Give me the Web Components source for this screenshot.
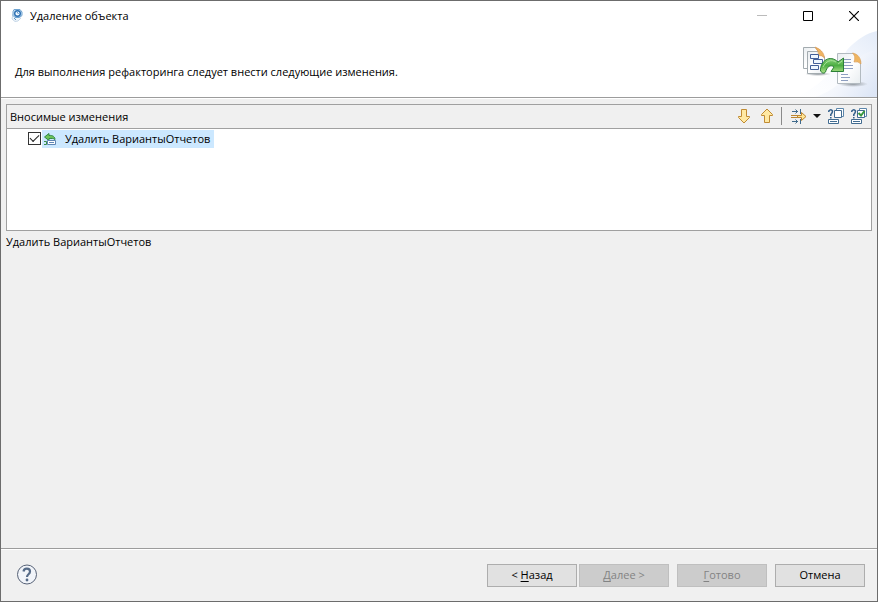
<!DOCTYPE html>
<html lang="ru">
<head>
<meta charset="utf-8">
<title>Удаление объекта</title>
<style>
  html, body { height: 100%; margin: 0; }
  body { font: 11px/16px "Open Sans", "Noto Sans", sans-serif; color: #000; }
</style>
</head>
<body>
<wizard-window>
  <title-bar slot="title">Удаление объекта</title-bar>
  <wizard-banner slot="banner">Для выполнения рефакторинга следует внести следующие изменения.</wizard-banner>
  <changes-pane>
    <span slot="heading">Вносимые изменения</span>
    <change-item>Удалить ВариантыОтчетов</change-item>
  </changes-pane>
  <change-details>Удалить ВариантыОтчетов</change-details>
  <wizard-footer slot="footer">
    <wizard-button>&lt; <u>Н</u>азад</wizard-button>
    <wizard-button disabled><u>Д</u>алее &gt;</wizard-button>
    <wizard-button slot="finish" disabled><u>Г</u>отово</wizard-button>
    <wizard-button slot="finish">Отмена</wizard-button>
  </wizard-footer>
</wizard-window>

<script>
function define(name, html, setup) {
  const template = document.createElement('template');
  template.innerHTML = html;
  customElements.define(name, class extends HTMLElement {
    constructor() {
      super();
      this.attachShadow({ mode: 'open' }).append(template.content.cloneNode(true));
    }
    connectedCallback() { if (setup) setup(this); }
  });
}

define('wizard-window', `
<style>
  :host { display: flex; flex-direction: column; box-sizing: border-box; min-height: 100vh; border: 1px solid #6c6c6c; background: #f0f0f0; }
  main { flex: 1; padding: 6px 5px; display: flex; flex-direction: column; gap: 3px; }
</style>
<slot name="title"></slot>
<slot name="banner"></slot>
<main><slot></slot></main>
<slot name="footer"></slot>`);

define('title-bar', `
<style>
  :host { display: flex; align-items: center; height: 29px; background: #fff; }
  .logo { width: 16px; height: 16px; margin: 0 5px 0 8px; }
  .name { flex: 1; }
  button { width: 46px; height: 29px; padding: 0; border: 0; background: none; display: grid; place-items: center; color: #000; }
  button:disabled { color: #bbb; }
</style>
<svg class="logo" viewBox="0 0 16 16" fill="none">
  <path d="M4 6L3 11L6 13.500L9 13L12 10" fill="#eef4fa" stroke="#c6d8e8"/>
  <path d="M5 1.500H11L13 4V7.500L10.500 9.500H6L4 7.500V3.500Z" fill="#c8def1" stroke="#6fa3d0"/>
  <circle cx="8.500" cy="5.500" r="2.800" fill="#f4f9ff" stroke="#2a6fb2" stroke-width="1.400"/>
  <path d="M8 4L9.500 6" stroke="#5b93c6"/>
  <path d="M5 10L7 12" stroke="#5b93c6"/>
</svg>
<span class="name"><slot></slot></span>
<button aria-label="Свернуть" disabled><svg width="10" height="10"><path d="M0 4.500H10" stroke="currentColor"/></svg></button>
<button aria-label="Развернуть"><svg width="10" height="10"><path d="M.5.5H9.500V9.500H.5Z" fill="none" stroke="currentColor"/></svg></button>
<button aria-label="Закрыть"><svg width="10" height="10"><path d="M0 0L10 10M10 0L0 10" stroke="currentColor" stroke-width="1.200"/></svg></button>`);

define('wizard-banner', `
<style>
  :host { display: flex; height: 67px; background: #fff; border-bottom: 1px solid #9c9c9c; box-shadow: 0 1px #fff; }
  p { flex: 1; margin: 0; padding: 34px 0 0 14px; }
  svg { flex: none; width: 80px; height: 67px; }
</style>
<p><slot></slot></p>
<svg viewBox="0 0 80 67">
  <defs>
    <linearGradient id="sky" x1="0" y1="1" x2="1" y2="0"><stop offset="0" stop-color="#fff"/><stop offset=".5" stop-color="#f8fafe"/><stop offset="1" stop-color="#e3ebf8"/></linearGradient>
    <linearGradient id="wave" x1="0" y1=".3" x2="1" y2=".8"><stop offset="0" stop-color="#fff"/><stop offset=".5" stop-color="#f3f6fc"/><stop offset="1" stop-color="#dde6f6"/></linearGradient>
    <linearGradient id="paper" x1="0" y1="0" x2="1" y2="1"><stop offset="0" stop-color="#e9edf0"/><stop offset=".5" stop-color="#fff"/><stop offset="1" stop-color="#e8edf0"/></linearGradient>
    <linearGradient id="green" x1="0" y1="0" x2="0" y2="1"><stop offset="0" stop-color="#8bd37d"/><stop offset=".5" stop-color="#4cae43"/><stop offset="1" stop-color="#b2e58b"/></linearGradient>
    <radialGradient id="shadow"><stop offset="0" stop-color="#8f969d"/><stop offset="1" stop-color="#8f969d" stop-opacity="0"/></radialGradient>
  </defs>
  <path d="M80 1C70 3 60 9 50 20C38 42 20 57 0 67H80Z" fill="url(#sky)"/>
  <path d="M80 20C65 22 58 30 49 46C42 56 28 64 18 67H80Z" fill="url(#wave)"/>
  <g transform="translate(1 0)">
    <path d="M5.500 17.500H17L21.500 22V38.500H5.500Z" fill="url(#paper)" stroke="#a3abaf"/>
    <path d="M17 17Q21 18 24 22H20Z" fill="#e3a34f"/>
    <ellipse cx="20" cy="44" rx="13" ry="2" fill="url(#shadow)"/>
    <path d="M9.500 21.500H21L26.500 27V43.500H9.500Z" fill="url(#paper)" stroke="#a3abaf"/>
    <path d="M17 17C22 19 26 22 26.500 28Q24 25 20.500 25.500Q21 21 17 17Z" fill="#efb462" stroke="#d79755" stroke-width=".6"/>
    <path d="M12.500 24.500H20.500V28.500H12.500ZM15.500 29.500H24.500V33.500H15.500ZM12.500 35.500H20.500V39.500H12.500Z" fill="#eef6ff" stroke="#425f99"/>
    <ellipse cx="55" cy="54" rx="15" ry="3" fill="url(#shadow)"/>
    <path d="M39.500 23.500H55L62.500 31V53.500H39.500Z" fill="url(#paper)" stroke="#b2bac0"/>
    <path d="M54.500 23C60 24 63 28 63 34Q60 31 56 32Q58 26 54.500 23Z" fill="#efb561" stroke="#d99c58" stroke-width=".6"/>
    <path d="M43 29.500H53M43 32.500H53M46 35.500H55M45 38.500H55M43 44.500H50M43 47.500H52M43 50.500H50" stroke="#8d9ec0"/>
    <path d="M22.500 41C22 31 32 24 40 32L45.500 28V41.500H33L36 37C32 34 29 37 27.500 42C26 44 24 43 22.500 41Z" fill="url(#green)" stroke="#2b8037"/>
    <path d="M25 37C28 31 33 29 38 32M40 34L44 31" fill="none" stroke="#a8e29a"/>
  </g>
</svg>`);

define('tool-button', `
<style>
  :host { display: block; }
  button { display: block; width: 16px; height: 16px; padding: 0; border: 0; background: none; }
  :host([narrow]) button { width: 8px; }
  ::slotted(svg) { display: block; fill: none; }
</style>
<button><slot></slot></button>`, el => {
  el.shadowRoot.querySelector('button').setAttribute('aria-label', el.getAttribute('name'));
});

define('changes-pane', `
<style>
  :host { display: block; border: 1px solid #a0a0a0; }
  header { display: flex; align-items: center; height: 23px; padding: 0 4px 0 3px; border-bottom: 1px solid #a0a0a0; }
  .heading { flex: 1; }
  .tools { display: flex; align-items: center; gap: 7px; height: 22px; align-self: flex-start; }
  .rule { width: 1px; height: 18px; background: #8a8a8a; }
  .filter { display: flex; align-items: center; gap: 6px; margin-left: 2px; }
  .list { height: 101px; background: #fff; }
  svg { display: block; fill: none; }
</style>
<header>
  <span class="heading"><slot name="heading"></slot></span>
  <div class="tools" role="toolbar">
    <tool-button name="Следующее изменение"><svg width="16" height="16"><path d="M6.500 1.500H11.500V8.500H14.500V9.500L9 15L3.500 9.500V8.500H6.500Z" fill="#ffe9a3" stroke="#c08b33"/></svg></tool-button>
    <tool-button name="Предыдущее изменение"><svg width="16" height="16"><path d="M6.500 14.500H11.500V7.500H14.500V6.500L9 1L3.500 6.500V7.500H6.500Z" fill="#ffe9a3" stroke="#c08b33"/></svg></tool-button>
    <span class="rule"></span>
    <div class="filter">
      <tool-button name="Фильтр изменений"><svg width="16" height="16"><path d="M1 3.500H7M1 13.500H7M9.500 1V6M9.500 11V16M4.500 1.500L6.500 3.500L4.500 5.500M4.500 11.500L6.500 13.500L4.500 15.500" stroke="#416b8c"/><path d="M0 7.500H7M0 9.500H7" stroke="#bd8631"/><path d="M6.500 7.500H10.500V4.500L15 8.500L10.500 12.500V9.500H6.500Z" fill="#ffe695" stroke="#bd8631"/></svg></tool-button>
      <tool-button narrow name="Меню фильтра"><svg width="8" height="16"><path d="M0 6H8L4 10Z" fill="#111"/></svg></tool-button>
    </div>
    <tool-button name="Показать скрытые изменения"><svg width="16" height="16"><path d="M8.500 3V.5H15.500V8.500H13.500" fill="#fff" stroke="#5c86ab"/><path d="M6.500 2.500H13.500V9.500H6.500Z" fill="#fff" stroke="#426c91"/><path d="M.8 4V3Q3 .5 4.500 3Q4.500 5 2.800 6.500V8M2.800 9V10.500" stroke="#315e8a" stroke-width="1.500"/><path d="M.5 11.500H10.500V15.500H.5Z" fill="#fff" stroke="#426c91"/><path d="M2 13.500H9" stroke="#426c91"/></svg></tool-button>
    <tool-button name="Показать выбранные изменения"><svg width="16" height="16"><path d="M8.500 3V.5H15.500V8.500H13.500" fill="#fff" stroke="#5c86ab"/><path d="M6.500 2.500H13.500V9.500H6.500Z" fill="#fff" stroke="#426c91"/><path d="M7.500 5L10 7.500L13.500 3" stroke="#39983e" stroke-width="2"/><path d="M.8 4V3Q3 .5 4.500 3Q4.500 5 2.800 6.500V8M2.800 9V10.500" stroke="#315e8a" stroke-width="1.500"/><path d="M.5 11.500H10.500V15.500H.5Z" fill="#fff" stroke="#426c91"/><path d="M2 13.500H9" stroke="#426c91"/></svg></tool-button>
  </div>
</header>
<div class="list"><slot></slot></div>`);

define('change-item', `
<style>
  :host { display: flex; align-items: center; height: 19px; padding-left: 21px; }
  label { display: flex; align-items: center; }
  input { appearance: none; flex: none; box-sizing: border-box; width: 13px; height: 13px; margin: 0 1px 0 0; border: 1px solid #333; background: #fff; display: grid; place-items: center; }
  input:checked::before { content: ""; width: 8px; height: 4px; border: solid #222; border-width: 0 0 1px 1px; transform: rotate(-45deg) translate(1px, -1px); }
  .text { display: flex; align-items: center; gap: 8px; height: 18px; padding-right: 4px; background: #cce8ff; }
  svg { margin-left: 1px; }
</style>
<label>
  <input type="checkbox" checked>
  <span class="text">
    <svg width="14" height="16" viewBox="0 0 14 16"><path d="M1.500 6L6 2.500V4.500C10 4 12 6 12 8.500C10 7 9 7.500 6 7.500V9.500Z" fill="#6dc45a" stroke="#2e8745"/><path d="M1 10.500H3.500V13.500H1" stroke="#3b8f4b" fill="none"/><path d="M4.500 9.500H12.500V13.500H4.500Z" fill="#fff" stroke="#5f86b5"/><path d="M6 11.500H11" stroke="#5f86b5"/></svg>
    <slot></slot>
  </span>
</label>`);

define('change-details', `
<style>:host { display: block; }</style>
<slot></slot>`);

define('wizard-button', `
<style>
  :host { display: block; }
  button { font: inherit; width: 90px; height: 23px; padding: 0; border: 1px solid #adadad; background: #e1e1e1; color: #000; }
  button:disabled { background: #ccc; border-color: #bfbfbf; color: #838383; }
  ::slotted(u) { text-underline-offset: 2px; }
</style>
<button><slot></slot></button>`, el => {
  el.shadowRoot.querySelector('button').disabled = el.hasAttribute('disabled');
});

define('wizard-footer', `
<style>
  :host { display: flex; align-items: center; height: 52px; padding: 0 12px 0 15px; border-top: 1px solid #9c9c9c; box-shadow: inset 0 1px #fff; }
  .help { padding: 0; border: 0; background: none; margin-right: auto; }
  .help svg { display: block; }
  .group { display: flex; gap: 2px; }
  .finish { gap: 8px; margin-left: 8px; }
</style>
<button class="help" aria-label="Справка"><svg width="22" height="22" fill="none"><circle cx="11" cy="10.500" r="9.500" fill="#f1f4f9" stroke="#566176"/><path d="M7.500 7.500C8 3.500 14 4 14 7.500C14 10.500 11 10 11 13" stroke="#566b88" stroke-width="2.200"/><circle cx="11" cy="16" r="1.400" fill="#566b88"/></svg></button>
<div class="group"><slot></slot></div>
<div class="group finish"><slot name="finish"></slot></div>`);
</script>
</body>
</html>
